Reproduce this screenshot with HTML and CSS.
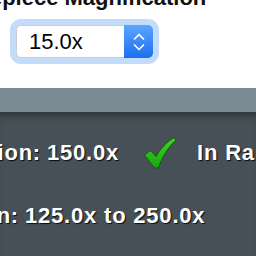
FILE: index.html
```html
<!DOCTYPE html>
<html lang="en">
<head>
  <meta charset="UTF-8" />
  <meta name="viewport" content="width=device-width, initial-scale=1.0"/>
  <title>Magnification</title>
  <link rel="stylesheet" href="styles.css">
</head>
<body>

  <div class="field">
    <h2 class="field-title">Eyepiece Magnification</h2>
    <div class="select" role="combobox" aria-label="Eyepiece magnification">
      <span class="select-value">15.0x</span>
      <span class="select-stepper">
        <svg width="12" height="20" viewBox="0 0 12 20" aria-hidden="true">
          <polyline points="1.5,7 6,2.5 10.5,7" />
          <polyline points="1.5,13 6,17.5 10.5,13" />
        </svg>
      </span>
    </div>
  </div>

  <div class="bar"></div>

  <div class="results">
    <div class="row">
      <span class="lead lead-total"><span>Total Magnification:</span></span>
      <span class="value">150.0x</span>
      <svg class="check" width="32" height="32" viewBox="0 0 32 32" aria-hidden="true">
        <defs>
          <linearGradient id="green" x1="0" y1="0" x2="0" y2="1">
            <stop offset="0" stop-color="#3fd42c"/>
            <stop offset="1" stop-color="#18a410"/>
          </linearGradient>
        </defs>
        <path d="M0.5 18 L6.5 13.5 L12 19.5 C17 11 23 4.5 30.5 0.5 L31.5 3.5 C24 10.5 18 20 14.5 31 L10.5 31 Z" />
      </svg>
      <span class="status">In Range</span>
    </div>
    <div class="row">
      <span class="lead lead-range"><span>Useful Magnification:</span></span>
      <span class="value">125.0x to 250.0x</span>
    </div>
  </div>

</body>
</html>
```

FILE: styles.css
```css
* {
  box-sizing: border-box;
  font-family: 'Liberation Sans', Arial, sans-serif;
}

body {
  margin: 0;
  width: 256px;
  height: 256px;
  overflow: hidden;
  background: #ffffff;
}

/* flow-root keeps the title's negative margin inside the field */
.field {
  display: flow-root;
  height: 88px;
  padding-left: 16px;
}

.field-title {
  margin: -13px 0 0 -53px;
  font-size: 22px;
  line-height: 22px;
  font-weight: bold;
  color: #111111;
  white-space: nowrap;
}

/* Focused select box with the blue ring */
.select {
  margin-top: 16px;
  width: 137px;
  height: 33px;
  display: flex;
  border: 1px solid #c9ced6;
  border-radius: 5px;
  background: #ffffff;
  box-shadow: 0 0 0 6px #c4dcfb;
}

.select-value {
  flex: 1;
  display: flex;
  align-items: center;
  padding-left: 12px;
  font-size: 22px;
  color: #000000;
}

.select-stepper {
  width: 29px;
  margin: -1px -1px -1px 0;
  display: flex;
  justify-content: center;
  align-items: center;
  border-radius: 0 5px 5px 0;
  background: linear-gradient(to bottom, #5ea5fc, #1a6ff1);
}

.select-stepper polyline {
  fill: none;
  stroke: #ffffff;
  stroke-width: 1.7;
  stroke-linecap: round;
  stroke-linejoin: round;
}

.bar {
  height: 24px;
  background: #7a8b94;
}

.results {
  height: 144px;
  padding-top: 29px;
  display: flex;
  flex-direction: column;
  gap: 39px;
  background: #465056;
  box-shadow: inset 0 9px 8px -6px rgba(0, 0, 0, 0.4);
}

.row {
  display: flex;
  align-items: center;
  height: 24px;
  font-size: 22px;
  line-height: 24px;
  font-weight: bold;
  letter-spacing: 0.8px;
  color: #ffffff;
  text-shadow: 1px 1px 1px rgba(0, 0, 0, 0.85);
  white-space: nowrap;
}

/* Labels run off the left edge, ending at a fixed point */
.lead {
  display: flex;
  justify-content: flex-end;
  flex-shrink: 0;
}

.lead-total {
  width: 41px;
}

.lead-range {
  width: 19px;
}

.value {
  margin-left: 6px;
}

.check {
  margin: -4px 0 -4px 25px;
  flex-shrink: 0;
}

.check path {
  fill: url(#green);
  stroke: #0f5f0b;
  stroke-width: 1;
  stroke-linejoin: round;
}

.status {
  margin-left: 21px;
}
```
